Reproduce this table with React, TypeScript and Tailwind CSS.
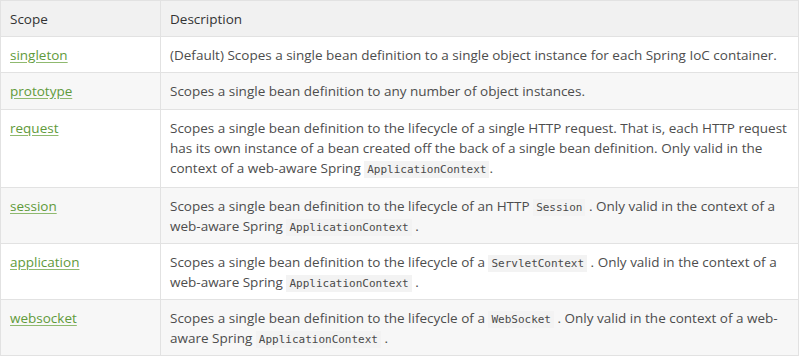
import React from "react";

const C = ({ children }: { children: React.ReactNode }) => (
  <code className="font-['DejaVu_Sans_Mono',monospace] text-[11px] leading-none bg-[#f3f3f3] px-[3px] py-[2px] text-[#4a4a4a]">
    {children}
  </code>
);

const rows: { scope: string; bg: string; pad: string; desc: React.ReactNode }[] = [
  {
    scope: "singleton",
    bg: "bg-white",
    pad: "pb-[7px]",
    desc: "(Default) Scopes a single bean definition to a single object instance for each Spring IoC container.",
  },
  {
    scope: "prototype",
    bg: "bg-[#f7f7f7]",
    pad: "pb-[8px]",
    desc: "Scopes a single bean definition to any number of object instances.",
  },
  {
    scope: "request",
    bg: "bg-white",
    pad: "pb-[9px]",
    desc: (
      <>
        Scopes a single bean definition to the lifecycle of a single HTTP request. That is, each HTTP request has its
        own instance of a bean created off the back of a single bean definition. Only valid in the context of a
        web-aware Spring <C>ApplicationContext</C>.
      </>
    ),
  },
  {
    scope: "session",
    bg: "bg-[#f7f7f7]",
    pad: "pb-[7px]",
    desc: (
      <>
        Scopes a single bean definition to the lifecycle of an HTTP <C>Session</C> . Only valid in the context of a
        web-aware Spring <C>ApplicationContext</C> .
      </>
    ),
  },
  {
    scope: "application",
    bg: "bg-white",
    pad: "pb-[7px]",
    desc: (
      <>
        Scopes a single bean definition to the lifecycle of a <C>ServletContext</C> . Only valid in the context of a
        web-aware Spring <C>ApplicationContext</C> .
      </>
    ),
  },
  {
    scope: "websocket",
    bg: "bg-[#f7f7f7]",
    pad: "pb-[7px]",
    desc: (
      <>
        Scopes a single bean definition to the lifecycle of a <C>WebSocket</C> . Only valid in the context of a
        web-aware Spring <C>ApplicationContext</C> .
      </>
    ),
  },
];

export default function App() {
  return (
    <div className="w-[800px] h-[358px] bg-white font-['Open_Sans',sans-serif] text-[13.5px] text-[#4d4d4d]">
      <table className="w-[799px] border-collapse border border-[#e2e2e2] leading-[20px]">
        <thead>
          <tr className="bg-[#f1f1f1]">
            <th className="w-[160px] border border-[#e2e2e2] px-[9px] pt-[8px] pb-[7px] text-left font-normal text-[#333]">
              Scope
            </th>
            <th className="border border-[#e2e2e2] px-[9px] pt-[8px] pb-[7px] text-left font-normal text-[#333]">
              Description
            </th>
          </tr>
        </thead>
        <tbody>
          {rows.map((r) => (
            <tr key={r.scope} className={r.bg}>
              <td className={`align-top border border-[#e2e2e2] px-[9px] pt-[8px] ${r.pad}`}>
                <a href="#" className="text-[#5f9a3a] underline decoration-[#8fb96f] underline-offset-2">
                  {r.scope}
                </a>
              </td>
              <td className={`align-top border border-[#e2e2e2] px-[9px] pt-[8px] ${r.pad}`}>{r.desc}</td>
            </tr>
          ))}
        </tbody>
      </table>
    </div>
  );
}
